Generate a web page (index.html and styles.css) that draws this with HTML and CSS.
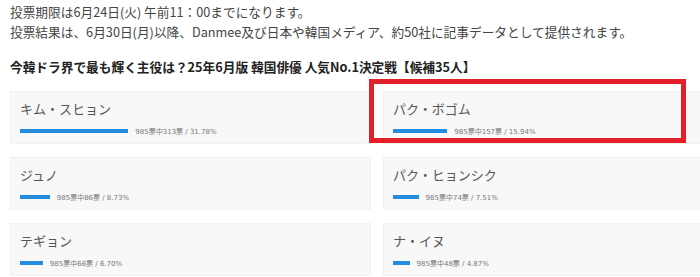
FILE: index.html
```html
<!DOCTYPE html>
<html lang="ja">
<head>
  <meta charset="UTF-8">
  <meta name="viewport" content="width=device-width, initial-scale=1.0">
  <title>人気投票</title>
  <link rel="stylesheet" href="styles.css">
</head>
<body>
  <div class="page">
    <div class="notes">
      <p>投票期限は6月24日(火) 午前11：00までになります。</p>
      <p>投票結果は、6月30日(月)以降、Danmee及び日本や韓国メディア、約50社に記事データとして提供されます。</p>
    </div>
    <h2 class="heading">今韓ドラ界で最も輝く主役は？25年6月版 韓国俳優 人気No.1決定戦【候補35人】</h2>
    <div class="candidates">
      <div class="candidate">
        <div class="name">キム・スヒョン</div>
        <div class="result">
          <div class="bar" style="width: 31.78%"></div>
          <div class="votes">985票中313票 / 31.78%</div>
        </div>
      </div>
      <div class="candidate marked">
        <div class="name">パク・ボゴム</div>
        <div class="result">
          <div class="bar" style="width: 15.94%"></div>
          <div class="votes">985票中157票 / 15.94%</div>
        </div>
      </div>
      <div class="candidate">
        <div class="name">ジュノ</div>
        <div class="result">
          <div class="bar" style="width: 8.73%"></div>
          <div class="votes">985票中86票 / 8.73%</div>
        </div>
      </div>
      <div class="candidate">
        <div class="name">パク・ヒョンシク</div>
        <div class="result">
          <div class="bar" style="width: 7.51%"></div>
          <div class="votes">985票中74票 / 7.51%</div>
        </div>
      </div>
      <div class="candidate">
        <div class="name">テギョン</div>
        <div class="result">
          <div class="bar" style="width: 6.70%"></div>
          <div class="votes">985票中66票 / 6.70%</div>
        </div>
      </div>
      <div class="candidate">
        <div class="name">ナ・イヌ</div>
        <div class="result">
          <div class="bar" style="width: 4.87%"></div>
          <div class="votes">985票中48票 / 4.87%</div>
        </div>
      </div>
    </div>
  </div>
</body>
</html>
```

FILE: styles.css
```css
* {
  padding: 0;
  margin: 0;
  box-sizing: border-box;
  font-family: "Noto Sans CJK JP", "Noto Sans", sans-serif;
}

html, body {
  background-color: #fff;
  overflow: hidden;
}

.page {
  padding: 2px 0 0 10px;
  width: 760px;

  & > .notes {
    & > p {
      font-size: 12.7px;
      line-height: 20px;
      color: #444;
    }
  }

  & > .heading {
    margin-top: 15px;
    font-size: 12.7px;
    line-height: 20px;
    font-weight: 700;
    color: #222;
  }

  & > .candidates {
    margin-top: 14px;
    display: grid;
    grid-template-columns: 361px 361px;
    column-gap: 12px;
    row-gap: 13px;

    .candidate {
      position: relative;
      background-color: #f8f8f8;
      border: 1px solid #f2f2f2;
      padding: 7px 9px 6px;
      height: 53px;

      & > .name {
        font-size: 13px;
        line-height: 20px;
        color: #555;
      }

      & > .result {
        margin-top: 6px;
        display: flex;
        align-items: center;
        gap: 7px;
        height: 12px;

        & > .bar {
          flex-shrink: 0;
          height: 4px;
          background-color: #228ce0;
        }

        & > .votes {
          font-family: "DejaVu Sans", "Noto Sans CJK JP", sans-serif;
          font-size: 7px;
          color: #777;
          white-space: nowrap;
        }
      }
    }

    .marked::after {
      content: "";
      box-sizing: border-box;
      position: absolute;
      left: -15px;
      top: -13px;
      width: 317px;
      height: 64px;
      border: 5px solid #e3202a;
    }
  }
}
```
